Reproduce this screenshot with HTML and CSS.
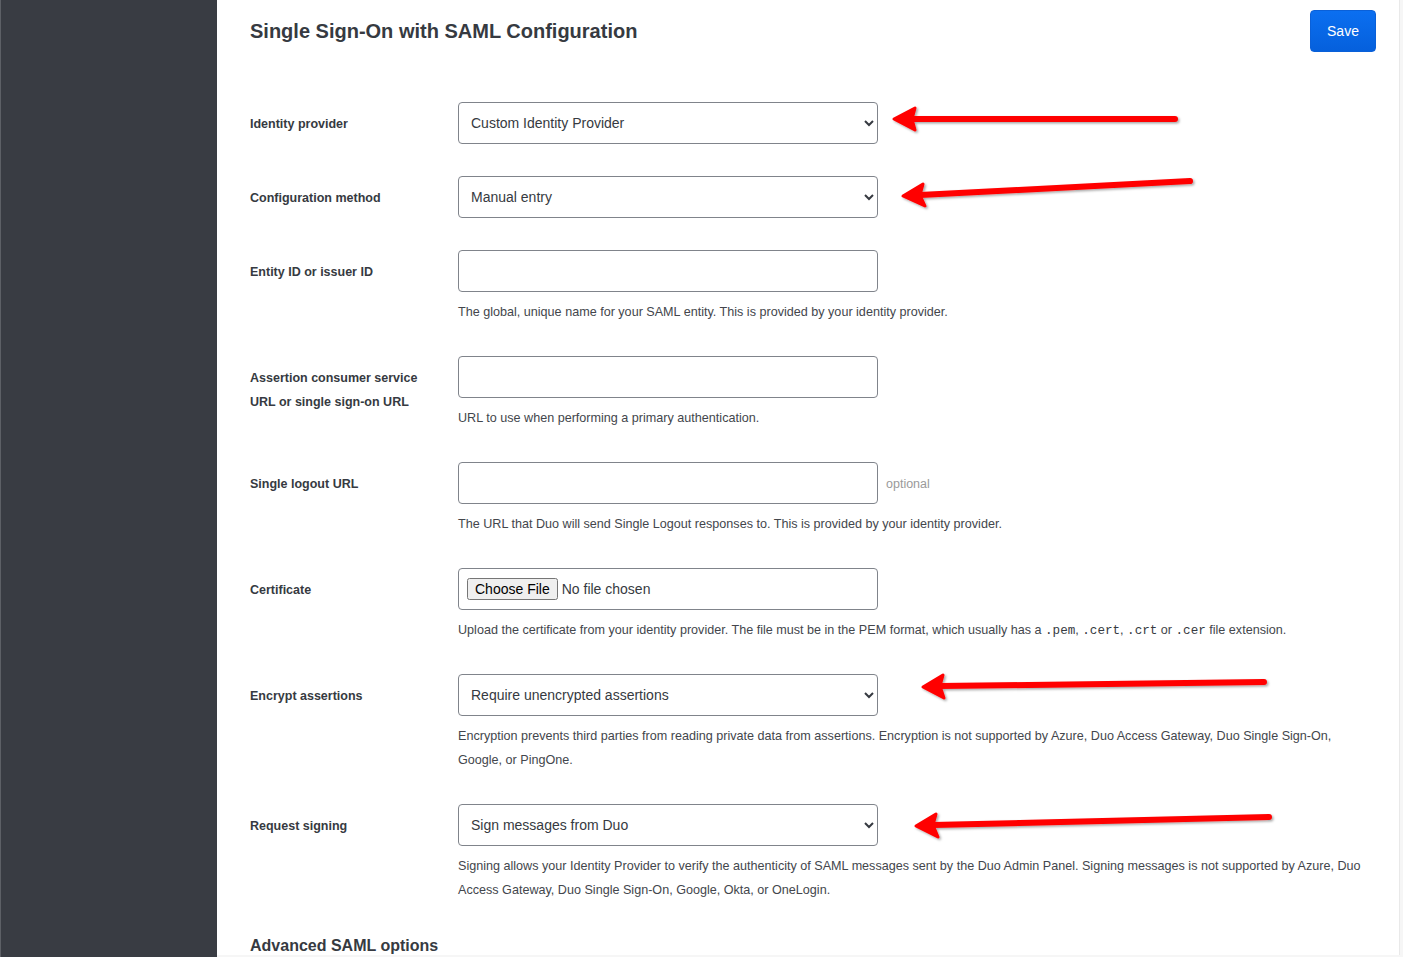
FILE: index.html
```html
<!DOCTYPE html>
<html lang="en">
<head>
<meta charset="utf-8">
<title>Single Sign-On with SAML Configuration</title>
<link rel="stylesheet" href="styles.css">
</head>
<body>
<aside class="sidebar"></aside>
<main class="main">
  <header class="page-header">
    <h1 class="page-title">Single Sign-On with SAML Configuration</h1>
    <button class="btn-save" type="button">Save</button>
  </header>

  <form class="form">
    <div class="row">
      <label class="label">Identity provider</label>
      <div class="control">
        <select class="field"><option>Custom Identity Provider</option></select>
      </div>
    </div>

    <div class="row">
      <label class="label">Configuration method</label>
      <div class="control">
        <select class="field"><option>Manual entry</option></select>
      </div>
    </div>

    <div class="row">
      <label class="label">Entity ID or issuer ID</label>
      <div class="control">
        <input class="field" type="text">
        <p class="help">The global, unique name for your SAML entity. This is provided by your identity provider.</p>
      </div>
    </div>

    <div class="row">
      <label class="label">Assertion consumer service<br>URL or single sign-on URL</label>
      <div class="control">
        <input class="field" type="text">
        <p class="help">URL to use when performing a primary authentication.</p>
      </div>
    </div>

    <div class="row">
      <label class="label">Single logout URL</label>
      <div class="control">
        <div class="inline">
          <input class="field" type="text">
          <span class="optional">optional</span>
        </div>
        <p class="help">The URL that Duo will send Single Logout responses to. This is provided by your identity provider.</p>
      </div>
    </div>

    <div class="row">
      <label class="label">Certificate</label>
      <div class="control">
        <div class="field file-box"><input class="file" type="file"></div>
        <p class="help">Upload the certificate from your identity provider. The file must be in the PEM format, which usually has a <code>.pem</code>, <code>.cert</code>, <code>.crt</code> or <code>.cer</code> file extension.</p>
      </div>
    </div>

    <div class="row">
      <label class="label">Encrypt assertions</label>
      <div class="control">
        <select class="field"><option>Require unencrypted assertions</option></select>
        <p class="help">Encryption prevents third parties from reading private data from assertions. Encryption is not supported by Azure, Duo Access Gateway, Duo Single Sign-On, Google, or PingOne.</p>
      </div>
    </div>

    <div class="row">
      <label class="label">Request signing</label>
      <div class="control">
        <select class="field"><option>Sign messages from Duo</option></select>
        <p class="help">Signing allows your Identity Provider to verify the authenticity of SAML messages sent by the Duo Admin Panel. Signing messages is not supported by Azure, Duo Access Gateway, Duo Single Sign-On, Google, Okta, or OneLogin.</p>
      </div>
    </div>

    <h2 class="section-title">Advanced SAML options</h2>
  </form>
</main>

<svg class="annotations" width="1403" height="957" viewBox="0 0 1403 957" aria-hidden="true">
  <defs>
    <filter id="shadow" x="-10%" y="-50%" width="120%" height="200%">
      <feDropShadow dx="1.5" dy="1.5" stdDeviation="1.2" flood-color="#000" flood-opacity="0.35"/>
    </filter>
  </defs>
  <g fill="#ff0000" stroke="#ff0000" stroke-linecap="round" stroke-linejoin="round" filter="url(#shadow)">
    <line x1="1175" y1="119" x2="910" y2="119" stroke-width="6"/>
    <polygon points="894,119 915,108 912,119 915,130" stroke-width="3"/>

    <line x1="1190" y1="181" x2="920" y2="195" stroke-width="6"/>
    <polygon points="903,196 923,184 920,195 925,206" stroke-width="3"/>

    <line x1="1264" y1="682" x2="940" y2="686" stroke-width="6"/>
    <polygon points="923,687 943,675 940,686 944,698" stroke-width="3"/>

    <line x1="1269" y1="817" x2="933" y2="825" stroke-width="6"/>
    <polygon points="916,826 936,814 933,825 938,837" stroke-width="3"/>
  </g>
</svg>
</body>
</html>
```

FILE: styles.css
```css
* {
  box-sizing: border-box;
}

html, body {
  margin: 0;
  padding: 0;
  height: 100%;
}

body {
  display: flex;
  min-height: 957px;
  background: #f6f6f6;
  font-family: "Liberation Sans", Arial, sans-serif;
  color: #363a41;
  overflow: hidden;
}

.sidebar {
  width: 217px;
  flex: 0 0 217px;
  background: #393c43;
  border-left: 1px solid #5d6066;
}

.main {
  width: 1183px;
  flex: 0 0 1183px;
  background: #ffffff;
  border-right: 1px solid #e9e9e9;
  padding: 10px 23px 0 33px;
  height: 955px;
  overflow: hidden;
}

.page-header {
  display: flex;
  justify-content: space-between;
  align-items: center;
  height: 42px;
}

.page-title {
  margin: 0;
  font-size: 20px;
  font-weight: 700;
  color: #363a41;
}

.btn-save {
  width: 66px;
  height: 42px;
  border: 1px solid #0a60d8;
  border-radius: 4px;
  background: linear-gradient(#0b6ff0, #0560dc);
  color: #ffffff;
  font-family: "Liberation Sans", Arial, sans-serif;
  font-size: 14px;
  padding: 0;
}

.form {
  margin-top: 50px;
}

.row {
  display: grid;
  grid-template-columns: 208px 1fr;
  margin-bottom: 32px;
}

.label {
  padding-top: 10px;
  font-size: 12.5px;
  font-weight: 700;
  line-height: 24px;
  color: #363a41;
}

.control {
  min-width: 0;
}

.field {
  display: block;
  width: 420px;
  height: 42px;
  border: 1px solid #80848b;
  border-radius: 4px;
  background: #ffffff;
  font-family: "Liberation Sans", Arial, sans-serif;
  font-size: 14px;
  color: #363a41;
  padding: 0 8px 0 8px;
  margin: 0;
}

input.field {
  padding: 0 12px;
}

.inline {
  display: flex;
  align-items: center;
  gap: 8px;
}

.optional {
  font-size: 12.5px;
  color: #9a9a9a;
  padding-top: 1px;
}

.file-box {
  display: flex;
  align-items: center;
  padding: 0 8px;
}

.file {
  font-family: "Liberation Sans", Arial, sans-serif;
  font-size: 14px;
  color: #363a41;
}

.help {
  margin: 8px 0 0;
  font-size: 12.6px;
  line-height: 24px;
  color: #43464c;
  max-width: 918px;
}

.help code {
  font-family: "Liberation Mono", "DejaVu Sans Mono", monospace;
  font-size: 12.6px;
  line-height: 1;
  color: #363a41;
}

.section-title {
  margin: 0;
  font-size: 16px;
  font-weight: 700;
  line-height: 24px;
  color: #363a41;
}

.annotations {
  position: absolute;
  left: 0;
  top: 0;
  pointer-events: none;
}
```
